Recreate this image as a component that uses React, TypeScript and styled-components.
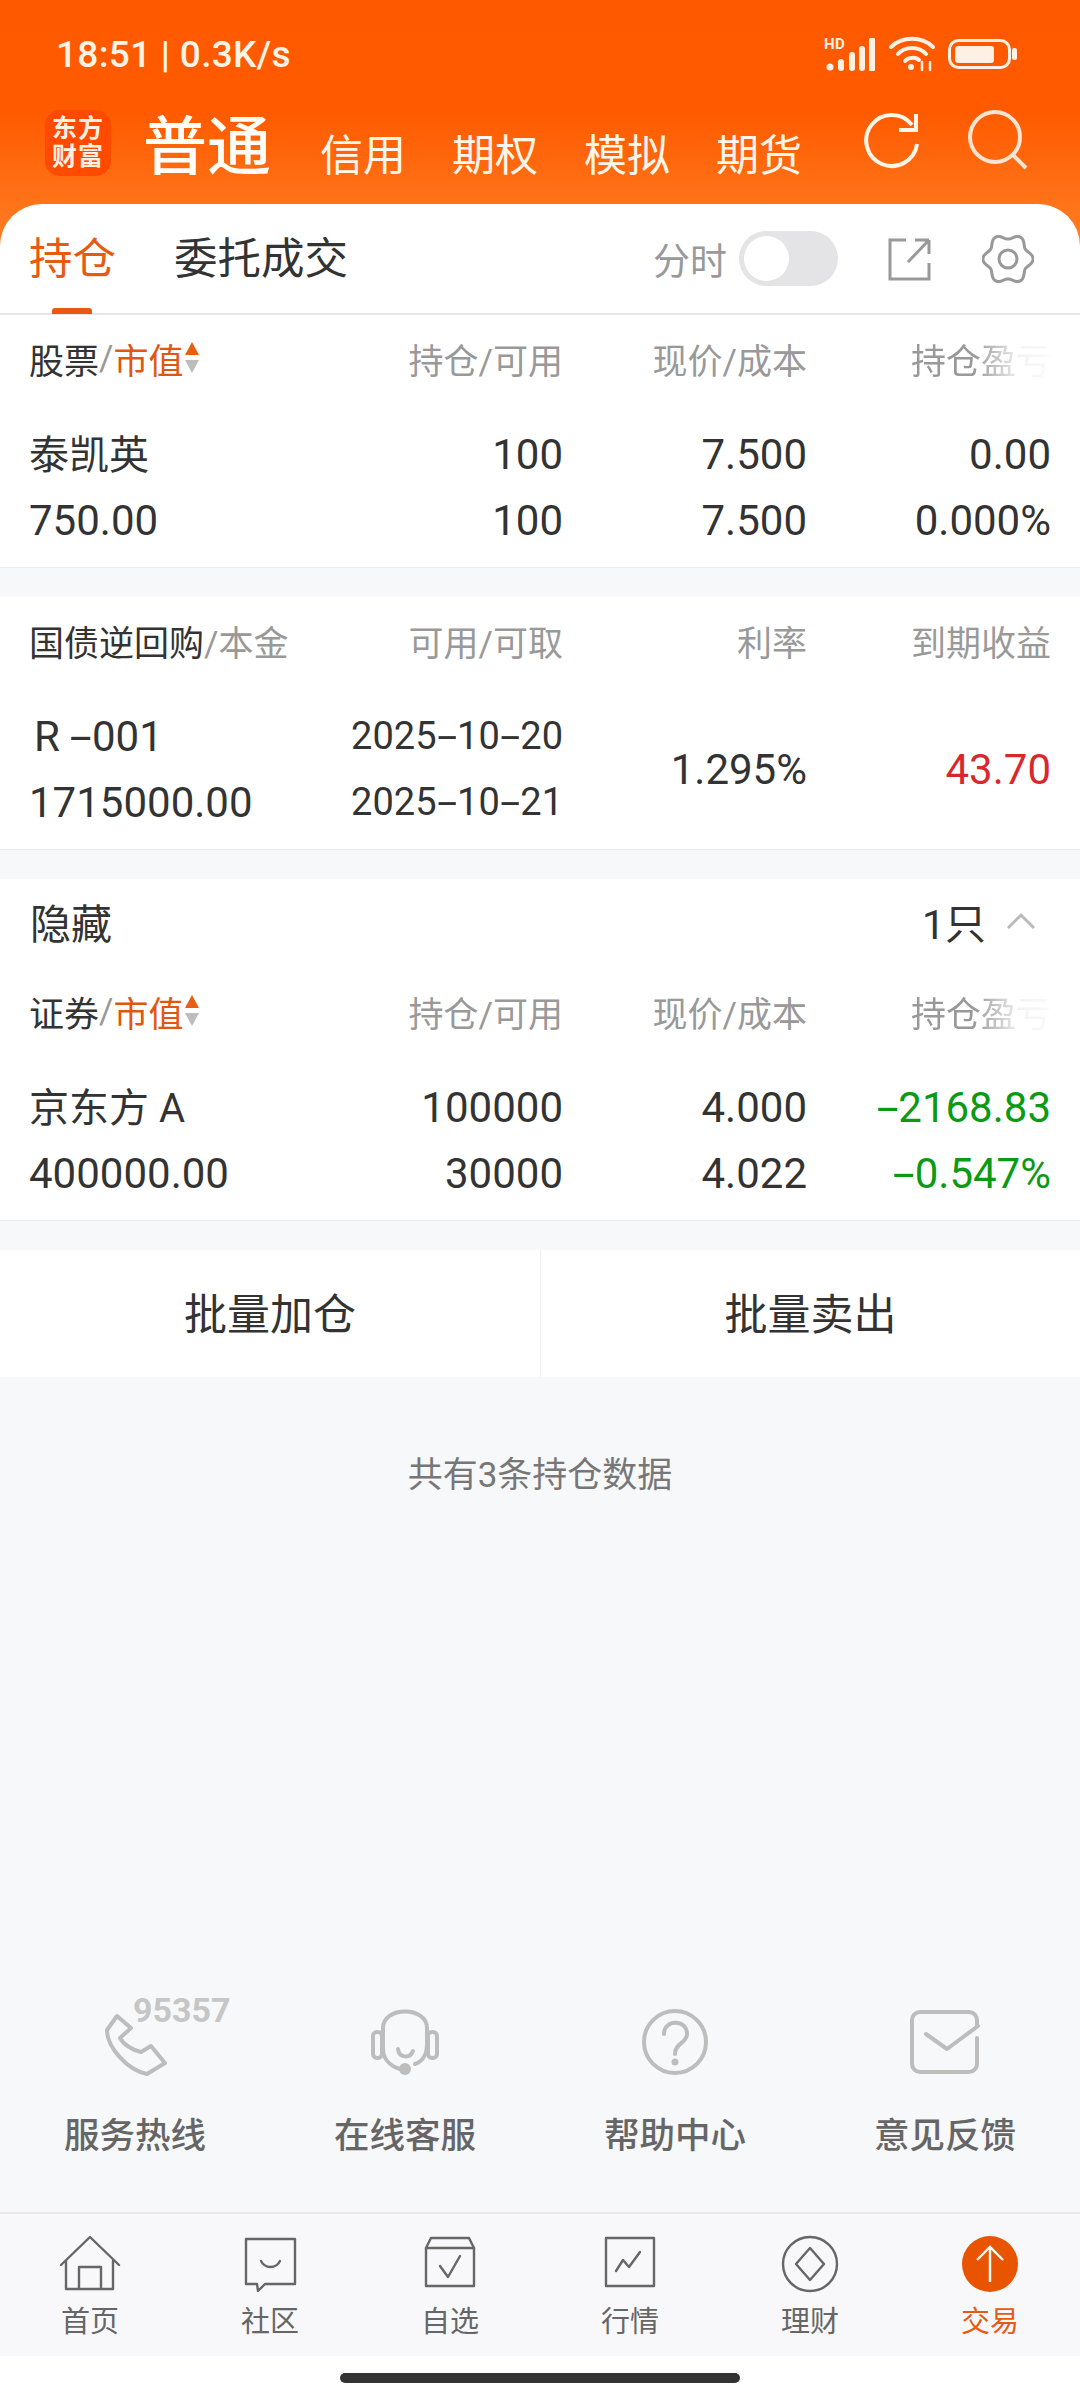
import styled, { createGlobalStyle } from "styled-components";
import type { ReactNode } from "react";

const GlobalStyle = createGlobalStyle`
    html, body {
        margin: 0;
        padding: 0;
        background: #f7f8fa;
        font-family: Roboto, "Noto Sans CJK SC", sans-serif;
        color: #333333;
    }
    * { box-sizing: border-box; }
`
const Page = styled.div`
    width: 1080px;
    height: 2400px;
    display: flex;
    flex-direction: column;
    overflow: hidden;
`
const Header = styled.header`
    background: linear-gradient(180deg, #ff5900 0, #ff5a00 110px, #ff7a20 230px, #ff7a20 100%);
`
const StatusBar = styled.div`
    height: 106px;
    padding: 2px 62px 0 56px;
    display: flex;
    align-items: center;
    justify-content: space-between;
    color: #fff3e8;
    font-size: 37px;
    font-weight: 500;
    letter-spacing: 0.3px;
`
const StatusIcons = styled.div`
    display: flex;
    align-items: center;
    gap: 12px;
`
const AppBar = styled.div`
    height: 98px;
    padding: 0 50px 0 45px;
    display: flex;
    align-items: flex-start;
`
const Logo = styled.div`
    width: 66px;
    height: 66px;
    margin-top: 4px;
    border-radius: 15px;
    background: #ff4a00;
    color: #fff0e0;
    font-size: 25px;
    font-weight: 700;
    line-height: 28px;
    letter-spacing: 1px;
    text-align: center;
    display: flex;
    align-items: center;
    justify-content: center;
`
const MainTab = styled.div`
    margin: -2px 0 0 32px;
    font-size: 64px;
    line-height: 88px;
    font-weight: 500;
    color: #fffdf5;
`
const SubTabs = styled.div`
    display: flex;
    gap: 46px;
    margin: 20px 0 0 49px;
`
const SubTab = styled.div`
    font-size: 43px;
    line-height: 60px;
    color: #fff6ea;
`
const AppActions = styled.div`
    margin: 3px 0 0 auto;
    display: flex;
    gap: 44px;
`
const TabBar = styled.div`
    height: 111px;
    padding: 0 46px 0 29px;
    background: #ffffff;
    border-radius: 42px 42px 0 0;
    border-bottom: 2px solid #e6e6e6;
    display: flex;
    align-items: center;
`
const Tab = styled.div<{ $active?: boolean }>`
    position: relative;
    margin-right: 58px;
    margin-top: 3px;
    font-size: 43.5px;
    line-height: 60px;
    color: ${(p) => (p.$active ? "#e85a10" : "#333333")};

    &::after {
        content: "";
        display: ${(p) => (p.$active ? "block" : "none")};
        position: absolute;
        left: 23px;
        bottom: -24px;
        width: 40px;
        height: 6px;
        border-radius: 3px 3px 0 0;
        background: #e85a10;
    }
`
const ToolGroup = styled.div`
    margin-left: auto;
    display: flex;
    align-items: center;
`
const ToolLabel = styled.span`
    font-size: 37px;
    color: #999999;
    margin-right: 12px;
`
const Switch = styled.div`
    width: 99px;
    height: 55px;
    padding: 5px;
    margin-right: 50px;
    border-radius: 28px;
    background: #e4e4e6;
`
const SwitchThumb = styled.div`
    width: 45px;
    height: 45px;
    border-radius: 50%;
    background: #ffffff;
`
const Section = styled.section`
    background: #ffffff;
    border-bottom: 1px solid #ececec;
    margin-bottom: 29px;
`
const HeadRow = styled.div`
    height: 86px;
    padding: 0 29px;
    margin-bottom: 2px;
    display: grid;
    grid-template-columns: 1fr 240px 244px 244px;
    align-items: center;
    font-size: 35px;
    color: #999999;
    white-space: nowrap;
`
const HeadCell = styled.div<{ $fade?: boolean }>`
    text-align: right;
    ${(p) => p.$fade && "-webkit-mask-image: linear-gradient(90deg, #000 45%, rgba(0,0,0,0.12) 78%, rgba(0,0,0,0.05) 100%); mask-image: linear-gradient(90deg, #000 45%, rgba(0,0,0,0.12) 78%, rgba(0,0,0,0.05) 100%); margin-left: auto;"}
`
const HeadLead = styled.div`
    display: flex;
    align-items: center;
`
const HeadStrong = styled.span`
    color: #333333;
`
const HeadSort = styled.span`
    color: #e0570f;
`
const DataGrid = styled.div`
    padding: 18px 29px 14px;
    display: grid;
    grid-template-columns: 1fr 240px 244px 244px;
    grid-auto-rows: 66px;
    align-items: center;
    color: #333333;
    white-space: nowrap;
`
const Name = styled.div<{ $indent?: boolean; $cjk?: boolean }>`
    padding-left: ${(p) => (p.$indent ? "5px" : "0")};
    font-size: ${(p) => (p.$cjk ? "40px" : "42px")};
    margin-bottom: ${(p) => (p.$cjk ? "5px" : "0")};
`
const Num = styled.div<{ $tone?: "red" | "green"; $span?: boolean; $date?: boolean }>`
    text-align: right;
    font-size: ${(p) => (p.$date ? "38px" : "42px")};
    color: ${(p) => (p.$tone === "red" ? "#d9282c" : p.$tone === "green" ? "#0b9a14" : "#333333")};
    ${(p) => p.$span && "grid-row: span 2;"}
`
const DashMark = styled.span`
    display: inline-block;
    margin: 0 5px;
    transform: scaleX(1.9);
`
const HideRow = styled.div`
    height: 89px;
    padding: 0 44px 5px 30px;
    display: flex;
    align-items: center;
    justify-content: space-between;
    font-size: 41px;
`
const HideCount = styled.div`
    display: flex;
    align-items: center;
    gap: 20px;
`
const BatchRow = styled.div`
    height: 127px;
    background: #ffffff;
    display: grid;
    grid-template-columns: 1fr 1fr;
`
const BatchButton = styled.div`
    display: flex;
    align-items: center;
    justify-content: center;
    padding-bottom: 5px;
    font-size: 43px;
    color: #333333;

    & + & {
        border-left: 1px solid #f0f0f0;
    }
`
const Note = styled.div`
    margin-top: 69px;
    text-align: center;
    font-size: 35px;
    line-height: 60px;
    color: #777777;
`
const Spacer = styled.div`
    flex: 1;
`
const Services = styled.div`
    display: grid;
    grid-template-columns: repeat(4, 1fr);
    padding-bottom: 46px;
`
const Service = styled.div`
    position: relative;
    display: flex;
    flex-direction: column;
    align-items: center;
`
const ServiceLabel = styled.div`
    margin-top: 24px;
    font-size: 35.500px;
    line-height: 60px;
    font-weight: 500;
    color: #666666;
`
const HotlineBadge = styled.span`
    position: absolute;
    left: 133px;
    top: -12px;
    font-size: 34px;
    line-height: 40px;
    font-weight: 700;
    color: #c6c6c6;
`
const BottomNav = styled.nav`
    height: 144px;
    padding-top: 20px;
    background: #f8f8fa;
    border-top: 2px solid #e8e8e8;
    display: grid;
    grid-template-columns: repeat(6, 1fr);
`
const NavItem = styled.div<{ $active?: boolean }>`
    display: flex;
    flex-direction: column;
    align-items: center;
    font-size: 29px;
    line-height: 56px;
    color: ${(p) => (p.$active ? "#e85a10" : "#666666")};
`
const HomeStrip = styled.div`
    height: 44px;
    background: #ffffff;
    display: flex;
    justify-content: center;
    padding-top: 17px;
`
const HomeBar = styled.div`
    width: 400px;
    height: 10px;
    border-radius: 5px;
    background: #333333;
`

// six lobed outline for the settings gear
function gearPath() {
    const pts: string[] = [];
    for (let i = 0; i < 120; i++) {
        const a = (i / 120) * Math.PI * 2;
        const r = 22.5 + 2.6 * Math.cos(6 * a);
        pts.push(`${(26 + r * Math.cos(a)).toFixed(1)} ${(26 + r * Math.sin(a)).toFixed(1)}`);
    }
    return `M${pts.join("L")}Z`;
}

function dashed(text: string): ReactNode {
    return text.split("-").map((part, i) => (
        <span key={i}>
            {i > 0 && <DashMark>-</DashMark>}
            {part}
        </span>
    ));
}

function SortArrows() {
    return (
        <svg width="18" height="34" viewBox="0 0 18 34">
            <path d="M9 1L16 14H2Z" fill="#e8600f" />
            <path d="M2 19H16L9 32Z" fill="#bdbdbd" />
        </svg>
    );
}

const navStroke = { fill: "none", stroke: "#666666", strokeWidth: 2.4, strokeLinejoin: "round", strokeLinecap: "round" } as const;
const serviceStroke = { fill: "none", stroke: "#bdbdbd", strokeWidth: 4, strokeLinejoin: "round", strokeLinecap: "round" } as const;

const navIcons: { label: string; icon: ReactNode; active?: boolean }[] = [
    {
        label: "首页",
        icon: <path {...navStroke} d="M3 31L32 3L61 31M8 27V55H55V27M21 55V33H43V55" />,
    },
    {
        label: "社区",
        icon: (
            <>
                <path {...navStroke} d="M8 5H57V50H27L20 57L19 50H8Z" />
                <path {...navStroke} d="M23 27C27 35 38 35 42 27" />
            </>
        ),
    },
    {
        label: "自选",
        icon: (
            <>
                <path {...navStroke} d="M8 14L13 4H51L56 14V52H8Z" />
                <path {...navStroke} d="M8 14H56" />
                <path {...navStroke} d="M22 32L30 43L42 22" />
            </>
        ),
    },
    {
        label: "行情",
        icon: (
            <>
                <path {...navStroke} d="M8 4H56V52H8Z" />
                <path {...navStroke} d="M18 37L25 26L31 33L42 18" />
            </>
        ),
    },
    {
        label: "理财",
        icon: (
            <>
                <circle {...navStroke} cx="32" cy="30" r="27" />
                <path {...navStroke} d="M32 14L46 30L32 46L18 30Z" />
            </>
        ),
    },
    {
        label: "交易",
        active: true,
        icon: (
            <>
                <circle cx="32" cy="30" r="28" fill="#e85400" />
                <path d="M32 48V13M19 26L32 13L45 26" fill="none" stroke="#fff" strokeWidth="2.4" />
            </>
        ),
    },
];

const services: { label: string; icon: ReactNode; badge?: string }[] = [
    {
        label: "服务热线",
        badge: "95357",
        icon: <path {...serviceStroke} d="M32 14L22 28C22 45 42 68 62 72L80 61L66 44L56 50C47 48 38 42 35 36L46 26Z" />,
    },
    {
        label: "在线客服",
        icon: (
            <>
                <path {...serviceStroke} d="M28 34V26C28 4 72 4 72 26V42C72 54 66 60 60 62" />
                <path {...serviceStroke} d="M28 34V46C28 56 34 64 45 67" />
                <rect {...serviceStroke} x="18" y="30" width="9" height="26" rx="4" />
                <rect {...serviceStroke} x="73" y="30" width="9" height="26" rx="4" />
                <path {...serviceStroke} d="M43 47C44 56 55 57 58 49" />
                <circle cx="50" cy="67" r="6" fill="#bdbdbd" />
            </>
        ),
    },
    {
        label: "帮助中心",
        icon: (
            <>
                <circle {...serviceStroke} cx="50" cy="40" r="31" />
                <path {...serviceStroke} d="M39 32C39 17 62 17 62 32C62 41 50 41 50 52" />
                <circle cx="50" cy="60" r="3.5" fill="#bdbdbd" />
            </>
        ),
    },
    {
        label: "意见反馈",
        icon: (
            <>
                <path {...serviceStroke} d="M82 36V62A8 8 0 0 1 74 70H25A8 8 0 0 1 17 62V18A8 8 0 0 1 25 10H74A8 8 0 0 1 82 18V24" />
                <path {...serviceStroke} d="M31 32L52 47L83 24" />
            </>
        ),
    },
];

export default function App() {
    return (
        <Page>
            <GlobalStyle />
            <Header>
                <StatusBar>
                    <span>18:51 | 0.3K/s</span>
                    <StatusIcons>
                        <svg width="52" height="36" viewBox="0 0 52 36" fill="#fff0e4">
                            <text x="0" y="13" fontSize="15" fontWeight="700" fontFamily="Roboto, sans-serif">HD</text>
                            <circle cx="6" cy="31" r="3.5" />
                            <rect x="14" y="23" width="6" height="12" rx="3" />
                            <rect x="25" y="16" width="6" height="19" rx="3" />
                            <rect x="35" y="10" width="6" height="25" rx="3" />
                            <rect x="45" y="2" width="6" height="33" rx="1" />
                        </svg>
                        <svg width="48" height="36" viewBox="0 0 48 36" fill="none" stroke="#fff0e4" strokeWidth="4" strokeLinecap="round">
                            <path d="M3 11C14 0 34 0 45 11" />
                            <path d="M10 18C17 10 31 10 38 18" />
                            <path d="M17 25C20 21 28 21 31 24" />
                            <circle cx="23" cy="31" r="3" fill="#fff0e4" stroke="none" />
                            <path d="M34 26V34M42 26V34" strokeWidth="2.5" />
                        </svg>
                        <svg width="70" height="30" viewBox="0 0 70 30">
                            <rect x="1.5" y="1.5" width="60" height="27" rx="9" fill="none" stroke="#fff0e4" strokeWidth="3" />
                            <rect x="7" y="7" width="39" height="17" rx="3" fill="#fff0e4" />
                            <rect x="64" y="9" width="5" height="12" rx="2" fill="#fff0e4" />
                        </svg>
                    </StatusIcons>
                </StatusBar>
                <AppBar>
                    <Logo>
                        <div>
                            东方
                            <br />
                            财富
                        </div>
                    </Logo>
                    <MainTab>普通</MainTab>
                    <SubTabs>
                        <SubTab>信用</SubTab>
                        <SubTab>期权</SubTab>
                        <SubTab>模拟</SubTab>
                        <SubTab>期货</SubTab>
                    </SubTabs>
                    <AppActions>
                        <svg width="60" height="62" viewBox="0 0 60 62" fill="none" stroke="#fff6ea" strokeWidth="4">
                            <path d="M50 16A25.500 25.500 0 1 0 55 35" />
                            <path d="M37 21H54V5" strokeWidth="4" />
                        </svg>
                        <svg width="64" height="62" viewBox="0 0 64 62" fill="none" stroke="#fde4d2" strokeWidth="4">
                            <circle cx="29" cy="28" r="25" />
                            <path d="M47 46L60 59" />
                        </svg>
                    </AppActions>
                </AppBar>
                <TabBar>
                    <Tab $active>持仓</Tab>
                    <Tab>委托成交</Tab>
                    <ToolGroup>
                        <ToolLabel>分时</ToolLabel>
                        <Switch>
                            <SwitchThumb />
                        </Switch>
                        <svg width="44" height="44" viewBox="0 0 44 44" fill="none" stroke="#999999" strokeWidth="3">
                            <path d="M18 3H2V42H41V26" />
                            <path d="M41 3V17M41 3H27M41 3L20 25" />
                        </svg>
                        <svg width="52" height="52" viewBox="0 0 52 52" fill="none" stroke="#999999" strokeWidth="3" style={{ marginLeft: 50 }}>
                            <path d={gearPath()} />
                            <circle cx="26" cy="26" r="9" />
                        </svg>
                    </ToolGroup>
                </TabBar>
            </Header>

            <Section>
                <HeadRow>
                    <HeadLead>
                        <HeadStrong>股票</HeadStrong>/<HeadSort>市值</HeadSort>
                        <SortArrows />
                    </HeadLead>
                    <HeadCell>持仓/可用</HeadCell>
                    <HeadCell>现价/成本</HeadCell>
                    <HeadCell $fade>持仓盈亏</HeadCell>
                </HeadRow>
                <DataGrid>
                    <Name $cjk>泰凯英</Name>
                    <Num>100</Num>
                    <Num>7.500</Num>
                    <Num>0.00</Num>
                    <Name>750.00</Name>
                    <Num>100</Num>
                    <Num>7.500</Num>
                    <Num>0.000%</Num>
                </DataGrid>
            </Section>

            <Section>
                <HeadRow>
                    <HeadLead>
                        <HeadStrong>国债逆回购</HeadStrong>/本金
                    </HeadLead>
                    <HeadCell>可用/可取</HeadCell>
                    <HeadCell>利率</HeadCell>
                    <HeadCell>到期收益</HeadCell>
                </HeadRow>
                <DataGrid>
                    <Name $indent>R {dashed("-001")}</Name>
                    <Num $date>{dashed("2025-10-20")}</Num>
                    <Num $span>1.295%</Num>
                    <Num $span $tone="red">43.70</Num>
                    <Name>1715000.00</Name>
                    <Num $date>{dashed("2025-10-21")}</Num>
                </DataGrid>
            </Section>

            <Section>
                <HideRow>
                    <span>隐藏</span>
                    <HideCount>
                        <span>1只</span>
                        <svg width="30" height="18" viewBox="0 0 30 18" fill="none" stroke="#bbbbbb" strokeWidth="3">
                            <path d="M2 16L15 3L28 16" />
                        </svg>
                    </HideCount>
                </HideRow>
                <HeadRow>
                    <HeadLead>
                        <HeadStrong>证券</HeadStrong>/<HeadSort>市值</HeadSort>
                        <SortArrows />
                    </HeadLead>
                    <HeadCell>持仓/可用</HeadCell>
                    <HeadCell>现价/成本</HeadCell>
                    <HeadCell $fade>持仓盈亏</HeadCell>
                </HeadRow>
                <DataGrid>
                    <Name $cjk>京东方 A</Name>
                    <Num>100000</Num>
                    <Num>4.000</Num>
                    <Num $tone="green">{dashed("-2168.83")}</Num>
                    <Name>400000.00</Name>
                    <Num>30000</Num>
                    <Num>4.022</Num>
                    <Num $tone="green">{dashed("-0.547%")}</Num>
                </DataGrid>
            </Section>

            <BatchRow>
                <BatchButton>批量加仓</BatchButton>
                <BatchButton>批量卖出</BatchButton>
            </BatchRow>
            <Note>共有3条持仓数据</Note>
            <Spacer />

            <Services>
                {services.map((s) => (
                    <Service key={s.label}>
                        <svg width="100" height="80" viewBox="0 0 100 80">
                            {s.icon}
                        </svg>
                        {s.badge && <HotlineBadge>{s.badge}</HotlineBadge>}
                        <ServiceLabel>{s.label}</ServiceLabel>
                    </Service>
                ))}
            </Services>

            <BottomNav>
                {navIcons.map((n) => (
                    <NavItem key={n.label} $active={n.active}>
                        <svg width="64" height="60" viewBox="0 0 64 60">
                            {n.icon}
                        </svg>
                        {n.label}
                    </NavItem>
                ))}
            </BottomNav>
            <HomeStrip>
                <HomeBar />
            </HomeStrip>
        </Page>
    );
}
